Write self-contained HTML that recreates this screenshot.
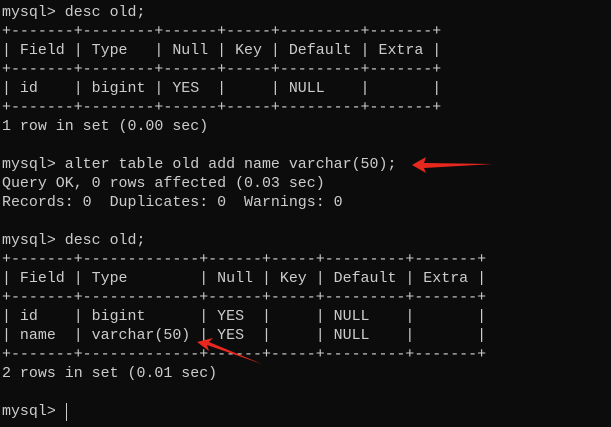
<html><head><style>
body{margin:0;background:#0c0c0c;width:611px;height:427px;overflow:hidden;position:relative}
pre{margin:0;position:absolute;left:2px;top:4px;font-family:"Liberation Mono",monospace;font-size:14.95px;line-height:19px;color:#cccccc}
</style></head><body>
<pre>mysql&gt; desc old;
+-------+--------+------+-----+---------+-------+
| Field | Type   | Null | Key | Default | Extra |
+-------+--------+------+-----+---------+-------+
| id    | bigint | YES  |     | NULL    |       |
+-------+--------+------+-----+---------+-------+
1 row in set (0.00 sec)

mysql&gt; alter table old add name varchar(50);
Query OK, 0 rows affected (0.03 sec)
Records: 0  Duplicates: 0  Warnings: 0

mysql&gt; desc old;
+-------+-------------+------+-----+---------+-------+
| Field | Type        | Null | Key | Default | Extra |
+-------+-------------+------+-----+---------+-------+
| id    | bigint      | YES  |     | NULL    |       |
| name  | varchar(50) | YES  |     | NULL    |       |
+-------+-------------+------+-----+---------+-------+
2 rows in set (0.01 sec)

mysql&gt; </pre>
<div style="position:absolute;left:66px;top:403px;width:1px;height:18px;background:#ccc"></div>
<svg width="611" height="427" style="position:absolute;left:0;top:0">
<polygon points="412,165 426,157 424,163 493,164 424,168 426,173" fill="#e8281e"/>
<polygon points="197,342 213,338 209,342 262,364 207,345 209,351" fill="#e8281e"/>
</svg>
</body></html>
